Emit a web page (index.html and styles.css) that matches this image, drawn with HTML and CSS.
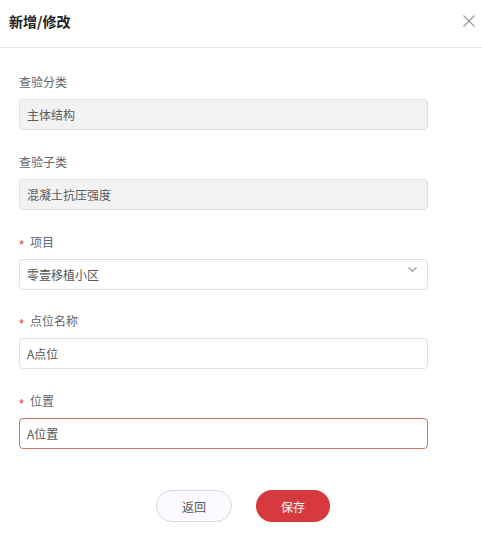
FILE: index.html
```html
<!DOCTYPE html>
<html lang="zh">
<head>
<meta charset="utf-8">
<title>新增/修改</title>
<link rel="stylesheet" href="styles.css">
</head>
<body>
<div class="dialog">
  <div class="header">
    <span class="title">新增/修改</span>
    <svg class="close" width="12" height="12" viewBox="0 0 12 12"><path d="M0.5 0.5L11.5 11.5M11.5 0.5L0.5 11.5" stroke="#9a9a9a" stroke-width="1.2" fill="none"/></svg>
  </div>
  <div class="form">
    <div class="field">
      <div class="label">查验分类</div>
      <div class="input disabled">主体结构</div>
    </div>
    <div class="field">
      <div class="label">查验子类</div>
      <div class="input disabled">混凝土抗压强度</div>
    </div>
    <div class="field">
      <div class="label"><span class="star">*</span>项目</div>
      <div class="input select">零壹移植小区
        <svg class="chev" width="9" height="5" viewBox="0 0 9 5"><path d="M0.5 0.5L4.5 4.3L8.5 0.5" stroke="#8a8f99" stroke-width="1.1" fill="none"/></svg>
      </div>
    </div>
    <div class="field">
      <div class="label"><span class="star">*</span>点位名称</div>
      <div class="input">A点位</div>
    </div>
    <div class="field">
      <div class="label"><span class="star">*</span>位置</div>
      <div class="input error">A位置</div>
    </div>
  </div>
  <div class="actions">
    <button class="btn back">返回</button>
    <button class="btn save">保存</button>
  </div>
</div>
</body>
</html>
```

FILE: styles.css
```css
* { box-sizing: border-box; }
html, body { margin: 0; padding: 0; background: #fff; }
body {
  font-family: "Noto Sans CJK SC", "Liberation Sans", sans-serif;
  width: 482px;
  height: 547px;
  overflow: hidden;
}
.header {
  height: 48px;
  border-bottom: 1px solid #e8e8e8;
  display: flex;
  align-items: center;
  justify-content: space-between;
  padding: 0 7px 6px 9px;
}
.title {
  font-size: 14px;
  font-weight: 700;
  color: #222;
  line-height: 20px;
}
.close { display: block; }
.form {
  padding: 24px 54px 0 19px;
}
.field { margin-bottom: 21.75px; }
.label {
  font-size: 12px;
  line-height: 20px;
  height: 20px;
  color: #62656b;
  margin-bottom: 7px;
  display: flex;
  align-items: center;
}
.star {
  color: #e6432a;
  width: 11px;
  font-family: "Liberation Sans", sans-serif;
  font-size: 13px;
  line-height: 20px;
  position: relative;
  top: 3px;
}
.input {
  position: relative;
  height: 31px;
  border: 1px solid #dcdfe6;
  border-radius: 4px;
  padding: 0 7px;
  font-size: 12px;
  line-height: 29px;
  color: #555;
  background: #fff;
}
.input.disabled {
  background: #f2f2f2;
  color: #5a5a5a;
}
.input.error { border-color: #c97664; }
.chev {
  position: absolute;
  right: 10px;
  top: 7px;
}
.actions {
  display: flex;
  justify-content: center;
  gap: 24px;
  margin-top: 41px;
  padding-left: 4px;
}
.btn {
  height: 32px;
  border-radius: 16px;
  font-family: "Noto Sans CJK SC", "Liberation Sans", sans-serif;
  font-size: 12px;
  padding: 0;
  cursor: pointer;
}
.back {
  width: 76px;
  background: #fcfaff;
  border: 1px solid #d9d6e4;
  color: #555;
}
.save {
  width: 74px;
  background: #d63a3e;
  border: none;
  color: #fff;
}
```
